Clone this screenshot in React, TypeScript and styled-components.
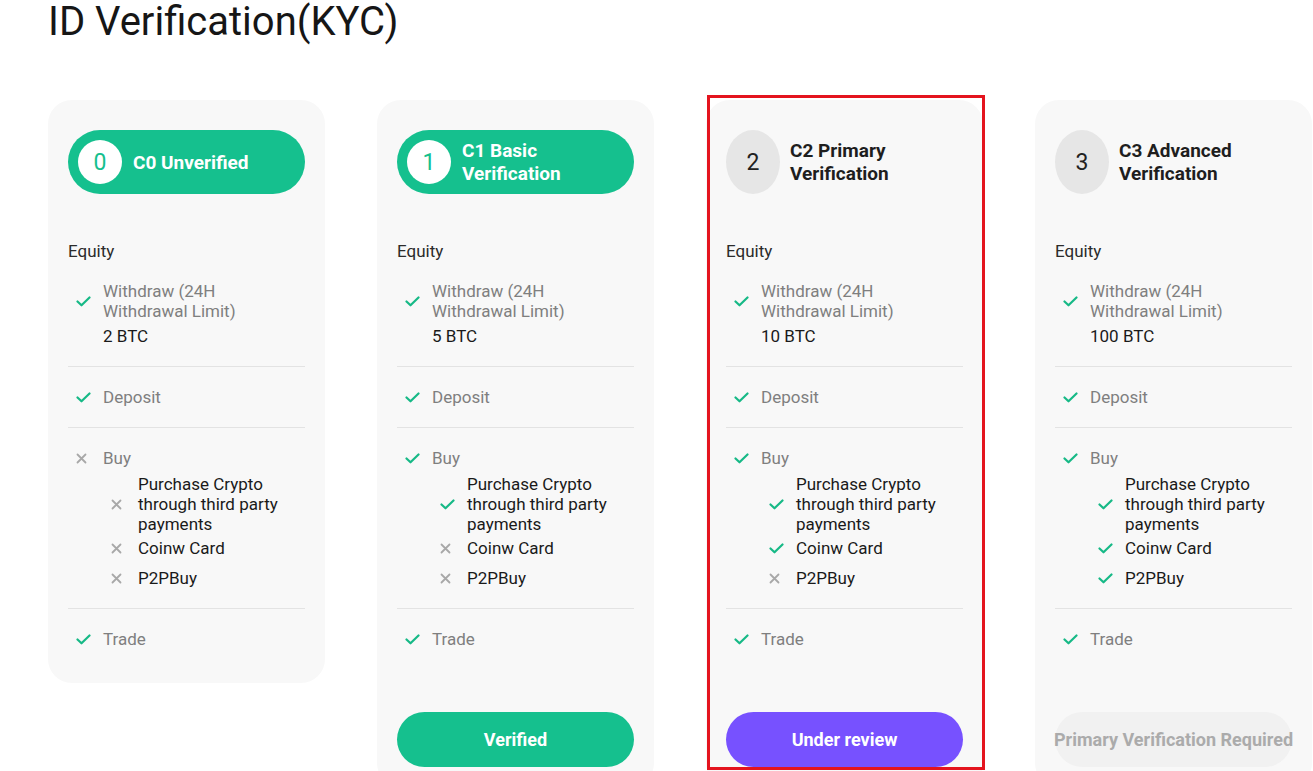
import React from "react";
import styled, { createGlobalStyle, css } from "styled-components";

type Status = "verified" | "review" | "locked" | "none";

type SubItem = { label: string; ok: boolean };

type Tier = {
  num: number;
  title: string[];
  active: boolean;
  limit: string;
  buy: boolean;
  subs: SubItem[];
  status: Status;
  highlight?: boolean;
};

const tiers: Tier[] = [
  {
    num: 0,
    title: ["C0 Unverified"],
    active: true,
    limit: "2 BTC",
    buy: false,
    subs: [
      { label: "Purchase Crypto through third party payments", ok: false },
      { label: "Coinw Card", ok: false },
      { label: "P2PBuy", ok: false },
    ],
    status: "none",
  },
  {
    num: 1,
    title: ["C1 Basic", "Verification"],
    active: true,
    limit: "5 BTC",
    buy: true,
    subs: [
      { label: "Purchase Crypto through third party payments", ok: true },
      { label: "Coinw Card", ok: false },
      { label: "P2PBuy", ok: false },
    ],
    status: "verified",
  },
  {
    num: 2,
    title: ["C2 Primary", "Verification"],
    active: false,
    limit: "10 BTC",
    buy: true,
    subs: [
      { label: "Purchase Crypto through third party payments", ok: true },
      { label: "Coinw Card", ok: true },
      { label: "P2PBuy", ok: false },
    ],
    status: "review",
    highlight: true,
  },
  {
    num: 3,
    title: ["C3 Advanced", "Verification"],
    active: false,
    limit: "100 BTC",
    buy: true,
    subs: [
      { label: "Purchase Crypto through third party payments", ok: true },
      { label: "Coinw Card", ok: true },
      { label: "P2PBuy", ok: true },
    ],
    status: "locked",
  },
];

const statusText: Record<Status, string> = {
  verified: "Verified",
  review: "Under review",
  locked: "Primary Verification Required",
  none: "",
};

const Mark: React.FC<{ ok: boolean }> = ({ ok }) =>
  ok ? (
    <svg width="15" height="11" viewBox="0 0 15 11">
      <path d="M1.5 5.5 L5.5 9.3 L13.5 1.5" fill="none" stroke="#16b986" strokeWidth="2.2" strokeLinecap="round" strokeLinejoin="round" />
    </svg>
  ) : (
    <svg width="11" height="11" viewBox="0 0 11 11">
      <path d="M1.5 1.5 L9.5 9.5 M9.5 1.5 L1.5 9.5" stroke="#a8a8a8" strokeWidth="1.8" strokeLinecap="round" />
    </svg>
  );

const App: React.FC = () => {
  return (
    <>
      <GlobalStyle />
      <Page>
        <Title>ID Verification(KYC)</Title>
        <Cards>
          {tiers.map((t) => (
            <Card key={t.num} $hasButton={t.status !== "none"}>
              {t.highlight && <Highlight />}
              <Header $active={t.active}>
                <Badge $active={t.active}>{t.num}</Badge>
                <HeaderText $active={t.active}>
                  {t.title.map((line) => (
                    <div key={line}>{line}</div>
                  ))}
                </HeaderText>
              </Header>
              <Equity>Equity</Equity>
              <Section>
                <Row>
                  <IconBox>
                    <Mark ok />
                  </IconBox>
                  <Label>
                    Withdraw (24H
                    <br />
                    Withdrawal Limit)
                  </Label>
                </Row>
                <Value>{t.limit}</Value>
              </Section>
              <Section>
                <Row>
                  <IconBox>
                    <Mark ok />
                  </IconBox>
                  <Label>Deposit</Label>
                </Row>
              </Section>
              <Section>
                <Row>
                  <IconBox>
                    <Mark ok={t.buy} />
                  </IconBox>
                  <Label>Buy</Label>
                </Row>
                <SubList>
                  {t.subs.map((s) => (
                    <Row key={s.label}>
                      <IconBox>
                        <Mark ok={s.ok} />
                      </IconBox>
                      <SubLabel>{s.label}</SubLabel>
                    </Row>
                  ))}
                </SubList>
              </Section>
              <Section $last>
                <Row>
                  <IconBox>
                    <Mark ok />
                  </IconBox>
                  <Label>Trade</Label>
                </Row>
              </Section>
              {t.status !== "none" && <StatusButton $status={t.status}>{statusText[t.status]}</StatusButton>}
            </Card>
          ))}
        </Cards>
      </Page>
    </>
  );
};

export default App;

const GlobalStyle = createGlobalStyle`
  html, body {
    margin: 0;
    padding: 0;
    background: #ffffff;
    height: 771px;
    overflow: hidden;
  }
  body {
    font-family: Roboto, "Noto Sans", Arial, sans-serif;
    color: #222;
  }
`;

const Page = styled.div`
  padding-left: 48px;
`;

const Title = styled.h1`
  margin: 0;
  font-size: 40px;
  line-height: 44px;
  font-weight: 400;
  color: #161616;
`;

const Cards = styled.div`
  display: flex;
  align-items: flex-start;
  gap: 52px;
  margin-top: 56px;
`;

const Card = styled.div<{ $hasButton: boolean }>`
  position: relative;
  flex-shrink: 0;
  width: 277px;
  box-sizing: border-box;
  display: flex;
  flex-direction: column;
  background: #f8f8f8;
  border-radius: 24px;
  padding: 30px 20px ${(p) => (p.$hasButton ? "20px" : "34px")};
`;

const Highlight = styled.div`
  position: absolute;
  top: -5px;
  left: 1px;
  right: -2px;
  bottom: 17px;
  border: 3px solid #e4141e;
  pointer-events: none;
`;

const Header = styled.div<{ $active: boolean }>`
  display: flex;
  align-items: center;
  height: 64px;
  border-radius: 32px;
  ${(p) =>
    p.$active
      ? css`
          background: #15c08e;
          padding-left: 10px;
          gap: 11px;
        `
      : css`
          background: transparent;
          gap: 10px;
        `}
`;

const Badge = styled.div<{ $active: boolean }>`
  display: flex;
  align-items: center;
  justify-content: center;
  flex-shrink: 0;
  border-radius: 50%;
  font-size: 23px;
  ${(p) =>
    p.$active
      ? css`
          width: 44px;
          height: 44px;
          background: #ffffff;
          color: #15c08e;
        `
      : css`
          width: 54px;
          height: 64px;
          background: #e6e6e6;
          color: #222;
        `}
`;

const HeaderText = styled.div<{ $active: boolean }>`
  font-size: 19px;
  line-height: 23px;
  font-weight: 700;
  color: ${(p) => (p.$active ? "#ffffff" : "#1e1e1e")};
`;

const Equity = styled.div`
  margin-top: 47px;
  font-size: 17px;
  line-height: 20px;
  color: #2b2b2b;
`;

const Section = styled.div<{ $last?: boolean }>`
  padding: 20px 0 ${(p) => (p.$last ? "0" : "20px")};
  border-bottom: ${(p) => (p.$last ? "none" : "1px solid #e3e3e3")};
`;

const Row = styled.div`
  display: flex;
  align-items: center;
`;

const IconBox = styled.div`
  width: 35px;
  flex-shrink: 0;
  padding-left: 8px;
  box-sizing: border-box;
  display: flex;
  align-items: center;
`;

const Label = styled.div`
  font-size: 17px;
  line-height: 20px;
  color: #7f7f7f;
`;

const Value = styled.div`
  margin-top: 5px;
  padding-left: 35px;
  font-size: 17px;
  line-height: 20px;
  color: #1a1a1a;
`;

const SubList = styled.div`
  display: flex;
  flex-direction: column;
  gap: 4px;
  margin-top: 6px;
  padding-left: 35px;

  & > :last-child {
    margin-top: 6px;
  }
`;

const SubLabel = styled.div`
  font-size: 17px;
  line-height: 20px;
  color: #1a1a1a;
`;

const StatusButton = styled.div<{ $status: Status }>`
  margin-top: 63px;
  height: 55px;
  border-radius: 28px;
  display: flex;
  align-items: center;
  justify-content: center;
  font-size: 18px;
  font-weight: 700;
  white-space: nowrap;
  ${(p) =>
    p.$status === "verified"
      ? css`
          background: #15c08e;
          color: #ffffff;
        `
      : p.$status === "review"
      ? css`
          background: #7751ff;
          color: #ffffff;
        `
      : css`
          background: #f1f1f1;
          color: #ababab;
        `}
`;
